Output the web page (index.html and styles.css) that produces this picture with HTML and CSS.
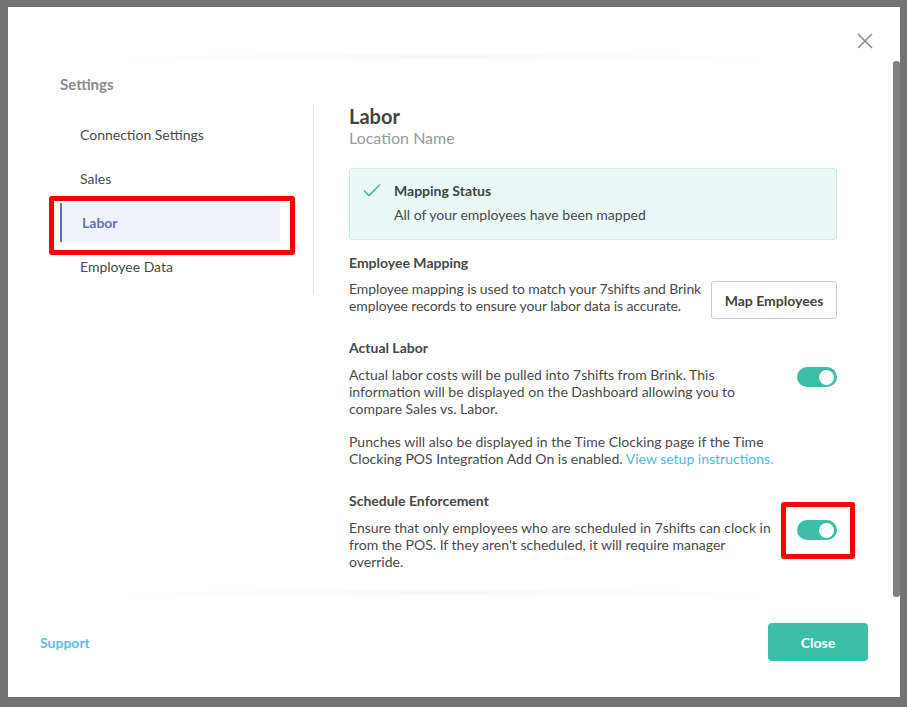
FILE: index.html
```html
<!DOCTYPE html>
<html lang="en">
<head>
<meta charset="utf-8">
<title>Settings - Labor</title>
<link rel="stylesheet" href="styles.css">
</head>
<body>
<div class="backdrop">
  <div class="modal">
    <div class="modal-top">
      <button class="close-x" aria-label="Close">
        <svg width="16" height="16" viewBox="0 0 16 16"><path d="M1 1 L15 15 M15 1 L1 15" stroke="#8a8a8a" stroke-width="1.5" fill="none"/></svg>
      </button>
    </div>
    <div class="modal-body">
      <h2 class="settings-title">Settings</h2>
      <div class="columns">
        <nav class="sidenav">
          <a class="nav-item">Connection Settings</a>
          <a class="nav-item">Sales</a>
          <a class="nav-item active">Labor</a>
          <a class="nav-item">Employee Data</a>
        </nav>
        <main class="content">
          <h1 class="title">Labor</h1>
          <div class="subtitle">Location Name</div>
          <div class="status">
            <svg class="check" width="18" height="18" viewBox="0 0 18 18"><path d="M1 8.5 L6 13.5 L17 2.5" stroke="#3bbfa6" stroke-width="1.6" fill="none"/></svg>
            <div>
              <div class="status-title">Mapping Status</div>
              <div class="status-text">All of your employees have been mapped</div>
            </div>
          </div>

          <h3 class="sec-head first">Employee Mapping</h3>
          <div class="row map-row">
            <p class="row-text">Employee mapping is used to match your 7shifts and Brink employee records to ensure your labor data is accurate.</p>
            <button class="btn-outline">Map Employees</button>
          </div>

          <h3 class="sec-head labor">Actual Labor</h3>
          <div class="row toggle-row">
            <p class="row-text">Actual labor costs will be pulled into 7shifts from Brink. This information will be displayed on the Dashboard allowing you to compare Sales vs. Labor.</p>
            <span class="toggle"><span class="knob"></span></span>
          </div>
          <p class="note">Punches will also be displayed in the Time Clocking page if the Time Clocking POS Integration Add On is enabled. <a class="link">View setup instructions.</a></p>

          <h3 class="sec-head sched">Schedule Enforcement</h3>
          <div class="row toggle-row">
            <p class="row-text">Ensure that only employees who are scheduled in 7shifts can clock in from the POS. If they aren't scheduled, it will require manager override.</p>
            <span class="toggle"><span class="knob"></span></span>
          </div>
        </main>
      </div>
    </div>
    <div class="modal-footer">
      <a class="support">Support</a>
      <button class="btn-primary">Close</button>
    </div>
    <div class="scroll-thumb"></div>
    <div class="annot annot-nav"></div>
    <div class="annot annot-toggle"></div>
  </div>
</div>
</body>
</html>
```
FILE: styles.css
```css
* { box-sizing: border-box; }
html, body {
  margin: 0;
  padding: 0;
  background: #737373;
  font-family: "Lato", "Liberation Sans", sans-serif;
  color: #4a4a4a;
}
.backdrop {
  width: 907px;
  height: 707px;
  padding: 7px 0 0 8px;
}
.modal {
  position: relative;
  width: 892px;
  height: 690px;
  background: #ffffff;
  display: flex;
  flex-direction: column;
}
.modal-top {
  height: 50px;
  display: flex;
  justify-content: flex-end;
  flex: none;
}
.close-x {
  width: 16px;
  height: 16px;
  padding: 0;
  border: 0;
  background: transparent;
  margin: 26px 27px 0 0;
  display: block;
}
.close-x svg { display: block; }
.modal-body {
  position: relative;
  height: 540px;
  flex: none;
  padding: 17px 0 0 52px;
}
.modal-body::before,
.modal-body::after {
  content: "";
  position: absolute;
  left: 40px;
  right: 60px;
  height: 8px;
  background: radial-gradient(ellipse at center, rgba(0,0,0,0.035) 0%, rgba(0,0,0,0) 70%);
}
.modal-body::before { top: -4px; }
.modal-body::after { bottom: 0px; }
.settings-title {
  margin: 0 0 10px 0;
  font-size: 15px;
  line-height: 20px;
  font-weight: 700;
  color: #8c8c8c;
}
.columns {
  display: flex;
  align-items: flex-start;
}
.sidenav {
  width: 254px;
  padding: 11px 0 8.5px 0;
  border-right: 1px solid #e2e2e2;
  display: flex;
  flex-direction: column;
  gap: 5px;
}
.nav-item {
  width: 220px;
  height: 39px;
  display: flex;
  align-items: center;
  padding-left: 20px;
  font-size: 14px;
  color: #4a4a4a;
  border-radius: 0 3px 3px 0;
}
.nav-item.active {
  background: #eff2fb;
  border-left: 2px solid #5f72c6;
  color: #5f72c6;
  font-weight: 700;
}
.content {
  margin-left: 35px;
  width: 488px;
}
.title {
  margin: 0;
  font-size: 20px;
  line-height: 24px;
  font-weight: 700;
  color: #444;
}
.subtitle {
  font-size: 16px;
  line-height: 20px;
  color: #9a9a9a;
}
.status {
  margin-top: 20px;
  background: #ebf9f6;
  border: 1px solid #c6ebe2;
  border-radius: 3px;
  padding: 13px 16px 15px 13px;
  display: flex;
  gap: 13px;
  align-items: flex-start;
}
.check { flex: none; margin-top: 0px; }
.status-title {
  font-size: 14px;
  line-height: 18px;
  font-weight: 700;
  color: #444;
}
.status-text {
  margin-top: 6px;
  font-size: 14px;
  line-height: 18px;
}
.sec-head {
  margin: 0;
  font-size: 14px;
  line-height: 17px;
  font-weight: 700;
  color: #484848;
}
.sec-head.first { margin-top: 13.5px; }
.sec-head.labor { margin-top: 19.5px; }
.sec-head.sched { margin-top: 25px; }
.row {
  display: flex;
  align-items: flex-start;
  gap: 2px;
  margin-top: 9px;
}
.toggle-row {
  margin-top: 10px;
  gap: 18px;
}
.row-text {
  flex: 1;
  margin: 0;
  font-size: 14px;
  line-height: 17px;
}
.map-row .row-text { letter-spacing: -0.1px; }
.btn-outline {
  flex: none;
  width: 126px;
  height: 38px;
  margin-top: 1.5px;
  border: 1px solid #cccccc;
  border-radius: 3px;
  background: #fff;
  font-family: inherit;
  font-size: 14px;
  font-weight: 700;
  color: #444;
}
.toggle {
  flex: none;
  position: relative;
  width: 40px;
  height: 20px;
  margin-top: 1.5px;
  border-radius: 10px;
  background: #3cbfa6;
  display: flex;
  justify-content: flex-end;
  align-items: center;
  padding-right: 3px;
}
.knob {
  width: 15px;
  height: 15px;
  border-radius: 50%;
  background: #fff;
}
.note {
  margin: 16px 0 0 0;
  font-size: 14px;
  line-height: 17px;
  width: 440px;
}
.link { color: #4fb9dd; }
.modal-footer {
  flex: 1;
  display: flex;
  justify-content: space-between;
  align-items: center;
  padding: 0 32px 10px 32px;
}
.support {
  font-size: 14px;
  font-weight: 700;
  color: #5cc0e0;
}
.btn-primary {
  width: 100px;
  height: 38px;
  border: 0;
  border-radius: 4px;
  background: #3cbfa6;
  color: #fff;
  font-family: inherit;
  font-size: 14px;
  font-weight: 700;
}
.scroll-thumb {
  position: absolute;
  right: 0;
  top: 54px;
  width: 7px;
  height: 536px;
  background: #808080;
  border-radius: 3px;
}
.annot {
  position: absolute;
  border: 5px solid #ff0000;
  border-radius: 3px;
  pointer-events: none;
}
.annot-nav {
  left: 41px;
  top: 189px;
  width: 246px;
  height: 59px;
}
.annot-toggle {
  left: 773px;
  top: 495px;
  width: 74px;
  height: 57px;
}
```
